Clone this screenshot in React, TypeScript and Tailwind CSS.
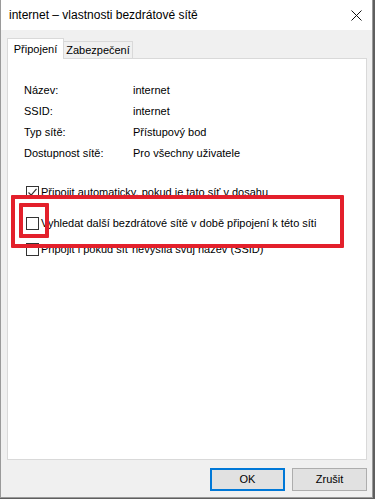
import React from 'react';

const font = { fontFamily: '"Segoe UI", "Liberation Sans", Arial, sans-serif' };

function Checkbox({ checked }: { checked?: boolean }) {
  return (
    <span className="w-[13px] h-[13px] border border-[#333333] bg-white flex items-center justify-center shrink-0">
      {checked && (
        <svg width="11" height="11" viewBox="0 0 11 11">
          <path d="M1.5 5.5 L4.2 8.2 L9.5 1.8" fill="none" stroke="#333" strokeWidth="1.2" />
        </svg>
      )}
    </span>
  );
}

const rows: [string, string][] = [
  ['Název:', 'internet'],
  ['SSID:', 'internet'],
  ['Typ sítě:', 'Přístupový bod'],
  ['Dostupnost sítě:', 'Pro všechny uživatele'],
];

export default function App() {
  return (
    <div className="w-[375px] h-[499px] bg-[#5f5f5f] text-[11px] text-black leading-none" style={font}>
      <div className="relative w-[373px] h-[498px] bg-[#f0f0f0] border-l border-r border-b border-[#9a9a9a] flex flex-col">
        {/* Title bar */}
        <div className="h-[30px] bg-white flex items-center justify-between pl-[8px] pr-[10px] shrink-0">
          <span className="text-[12px]">internet – vlastnosti bezdrátové sítě</span>
          <svg width="11" height="11" viewBox="0 0 11 11">
            <path d="M0.5 0.5 L10.5 10.5 M10.5 0.5 L0.5 10.5" stroke="#111" strokeWidth="1" />
          </svg>
        </div>

        {/* Tabs */}
        <div className="flex items-end pl-[6px] pt-[8px] h-[28px] shrink-0">
          <div className="relative z-10 h-[21px] w-[57px] bg-white border border-[#d9d9d9] border-b-0 flex items-center justify-center -mb-px">
            Připojení
          </div>
          <div className="h-[17px] w-[69px] bg-[#f0f0f0] border border-[#d9d9d9] border-l-0 border-b-0 flex items-center justify-center">
            Zabezpečení
          </div>
        </div>

        {/* Panel */}
        <div className="mx-[6px] w-[360px] h-[402px] bg-white border border-[#d9d9d9] shrink-0">
          <div className="pt-[25px] pl-[16px] flex flex-col gap-[9px]">
            {rows.map(([k, v]) => (
              <div key={k} className="flex h-[12px] items-center">
                <span className="w-[109px]">{k}</span>
                <span>{v}</span>
              </div>
            ))}
          </div>
          <div className="pl-[18px] pt-[26px] flex flex-col">
            <div className="flex items-center gap-[2px] h-[14px]">
              <Checkbox checked />
              <span>Připojit automaticky, pokud je tato síť v dosahu</span>
            </div>
            <div className="flex items-center gap-[2px] h-[14px] mt-[17px]">
              <Checkbox />
              <span>Vyhledat další bezdrátové sítě v době připojení k této síti</span>
            </div>
            <div className="flex items-center gap-[2px] h-[14px] mt-[12px]">
              <Checkbox />
              <span>Připojit i pokud síť nevysílá svůj název (SSID)</span>
            </div>
          </div>
        </div>

        {/* Buttons */}
        <div className="flex justify-end gap-[7px] pr-[5px] pt-[8px]">
          <button className="w-[75px] h-[23px] bg-[#e1e1e1] border-2 border-[#0078d7] flex items-center justify-center">
            OK
          </button>
          <button className="w-[75px] h-[23px] bg-[#e1e1e1] border border-[#adadad] flex items-center justify-center">
            Zrušit
          </button>
        </div>

        {/* Red annotation overlays */}
        <div className="absolute left-[10px] top-[195px] w-[333px] h-[53px] border-[4px] border-[#e3202b] rounded-[1px] pointer-events-none" />
        <div className="absolute left-[18px] top-[203px] w-[30px] h-[35px] border-[4px] border-[#e3202b] rounded-[1px] pointer-events-none" />
      </div>
    </div>
  );
}
